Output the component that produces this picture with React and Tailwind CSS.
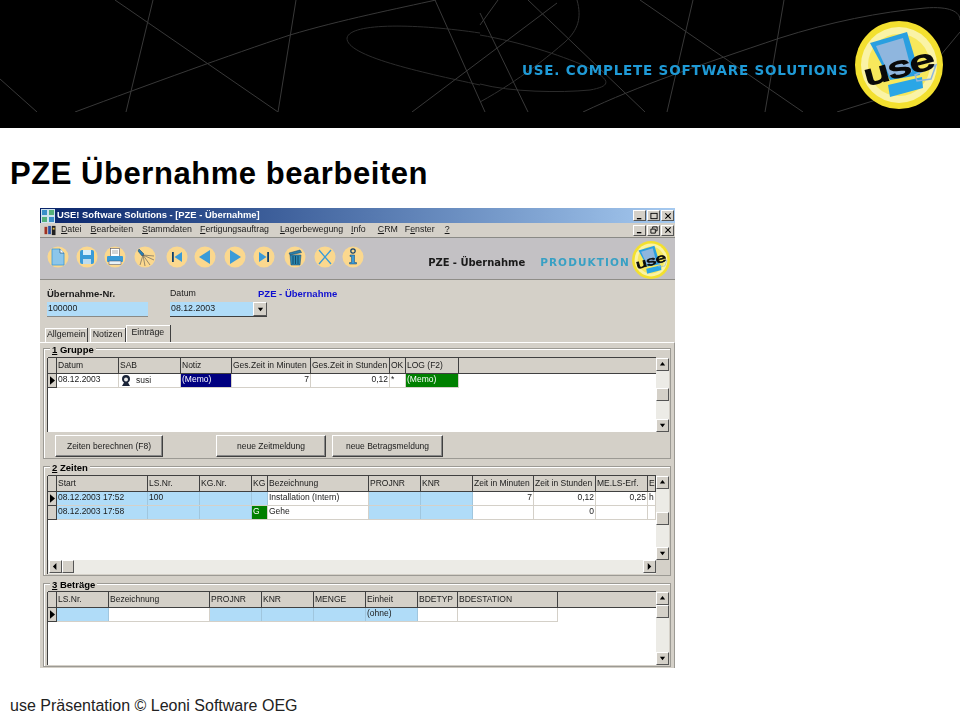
import React from "react";

const blue = "bg-[#b0dcf8]";
const raised = "border border-t-white border-l-white border-r-[#555] border-b-[#555]";

function HeaderLines() {
  return (
    <svg viewBox="0 0 960 112" className="w-[960px] h-[112px] block" fill="none" stroke="#383838" strokeWidth="1">
      <path d="M115 0L278 112M153 0L126 112M296 0L278 112M0 79L37 112" />
      <path d="M75 112C150 84 230 55 290 35C340 20 400 8 436 0" />
      <path d="M480 33C420 24 350 22 347 38C346 56 420 72 480 85" stroke="#2c2c2c" />
      <path d="M577 0C582 18 578 30 565 42C550 55 520 80 480 102" stroke="#303030" />
      <path d="M480 35C520 42 560 55 585 66C612 80 612 86 590 90C560 93 510 92 480 84" stroke="#2c2c2c" />
      <path d="M435 0L485 112M480 13L528 112M528 0L645 112M557 3L412 112M640 0L803 112M693 0L667 112M784 0L765 112M498 0L480 25" />
      <path d="M583 112C640 85 700 65 780 38C830 22 880 12 925 8C950 6 960 12 960 20" />
      <path d="M960 32L940 56M876 100L837 112" />
    </svg>
  );
}

function Logo({ className }) {
  return (
    <svg viewBox="0 0 88 88" className={className}>
      <circle cx="44" cy="44" r="44" fill="#f3e02f" />
      <circle cx="44" cy="44" r="38" fill="#faf3a6" />
      <circle cx="44" cy="44" r="31" fill="#f7e85c" />
      <polygon points="15,22 52,11 65,54 35,59" fill="#2a9fe0" />
      <polygon points="21,25 48,17 57,51 35,56" fill="#8fb6de" />
      <polygon points="33,64 67,56 68,67 35,76" fill="#2aa6e6" />
      <polygon points="60,54 81,44 76,58 62,60" fill="none" stroke="#8fb6de" strokeWidth="1.5" />
      <text x="8" y="56" transform="rotate(-15 44 45)" fontFamily="'Liberation Sans', sans-serif" fontWeight="400" fontSize="29" textLength="72" lengthAdjust="spacingAndGlyphs" fill="#0a0a0a" stroke="#0a0a0a" strokeWidth="1.5">use</text>
    </svg>
  );
}

function Tool({ className, children }) {
  return (
    <svg viewBox="0 0 22 22" className={"w-[22px] h-[22px] shrink-0 " + (className || "")}>
      <circle cx="11" cy="11" r="10.5" fill="#fbd88e" />
      {children}
    </svg>
  );
}

function Toolbar() {
  const c = "#3a9bd8";
  const d = "#10406c";
  return (
    <div className="flex pl-[7px] pt-[8px] h-[42px] items-start">
      <Tool><path d="M5 3h8l4 4v12H5z" fill="#8cc6ea" stroke={c} strokeWidth=".8" /><path d="M13 3v4h4" fill="#fff" stroke={d} strokeWidth=".6" /></Tool>
      <Tool className="ml-[7px]"><rect x="4" y="4" width="14" height="14" rx="2" fill={c} /><rect x="7" y="4" width="8" height="5" fill="#d8eefa" /><rect x="7" y="13" width="8" height="5" fill="#bcdcef" /></Tool>
      <Tool className="ml-[6px]"><rect x="6.5" y="2.5" width="9" height="8" fill="#fff" stroke="#556" strokeWidth=".6" /><path d="M8 5h6M8 7h6" stroke="#888" strokeWidth=".7" /><rect x="3" y="10" width="16" height="6" rx="1" fill={c} /><rect x="5" y="15" width="12" height="3.5" fill="#e8f2f8" stroke="#445" strokeWidth=".5" /></Tool>
      <Tool className="ml-[8px]"><path d="M5 3l5 5-2 2-4-5z" fill="#2a7fb4" stroke={d} strokeWidth=".5" /><path d="M9 9L20 10M9 9L20 14M9 9L16 19M9 9L11 20M9 9L6 19" stroke="#555" strokeWidth=".6" /></Tool>
      <Tool className="ml-[10px]"><rect x="6" y="6" width="1.8" height="10" fill={d} /><polygon points="16,6 16,16 8.5,11" fill={c} /></Tool>
      <Tool className="ml-[6px]"><polygon points="16,4 16,18 5,11" fill={c} /></Tool>
      <Tool className="ml-[8px]"><polygon points="6,4 6,18 17,11" fill={c} /></Tool>
      <Tool className="ml-[7px]"><polygon points="6,6 6,16 13.5,11" fill={c} /><rect x="14.2" y="6" width="1.8" height="10" fill={d} /></Tool>
      <Tool className="ml-[9px]"><path d="M5 7l11-3 1.5 2.5L6 9z" fill="#2a7fa8" stroke={d} strokeWidth=".5" /><path d="M6 9h11l-1 10H7z" fill="#2b88b0" stroke={d} strokeWidth=".5" /><path d="M9 10v8M11.5 10v8M14 10v8" stroke="#0e3a58" strokeWidth=".8" /></Tool>
      <Tool className="ml-[8px]"><path d="M5 4L17 18M17 4L5 18" stroke={c} strokeWidth="1.3" /></Tool>
      <Tool className="ml-[6px]"><circle cx="11" cy="5" r="2.2" fill="none" stroke={d} strokeWidth="1.2" /><path d="M8 9h4.5v7.5h2V18H7.5v-1.5h2v-6H8z" fill={c} stroke={d} strokeWidth=".5" /></Tool>
    </div>
  );
}

function Arrow({ dir }) {
  const pts = { up: "1,5 4,1 7,5", down: "1,2 4,6 7,2", left: "5,0 1,4 5,8", right: "2,0 6,4 2,8" }[dir];
  return (
    <div className={"w-[13px] h-[13px] shrink-0 bg-[#d4d0c8] flex items-center justify-center " + raised}>
      <svg viewBox="0 0 8 8" className="w-[7px] h-[7px]"><polygon points={pts} fill="#000" /></svg>
    </div>
  );
}

function VScroll({ thumb, corner }) {
  return (
    <div className="w-[13px] shrink-0 bg-[#ecebe6] flex flex-col">
      <Arrow dir="up" />
      <div className={"w-[13px] h-[13px] shrink-0 bg-[#d4d0c8] " + raised + " " + thumb} />
      <div className="flex-1" />
      <Arrow dir="down" />
      {corner && <div className="h-[14px] shrink-0 bg-[#d4d0c8]" />}
    </div>
  );
}

function HeadCell({ w, children }) {
  return (
    <div className={"h-full pl-[1px] border-r border-r-[#404040] shrink-0 whitespace-nowrap overflow-hidden leading-[14px] " + w}>{children}</div>
  );
}

function Cell({ w, bg, right, children }) {
  const line = bg === blue ? "border-r-[#a0c6de]" : "border-r-[#d4d0c8]";
  return (
    <div className={"h-full px-[1px] shrink-0 border-r whitespace-nowrap overflow-hidden leading-[11px] " + line + " " + w + " " + (bg || "") + (right ? " text-right" : "")}>{children}</div>
  );
}

function Grid({ height, cols, rows, thumb, hscroll }) {
  return (
    <div className={"flex border-l border-l-[#404040] text-[8.5px] " + height}>
      <div className="flex-1 min-w-0 flex flex-col bg-white">
        <div className="h-[15px] flex shrink-0 bg-[#d4d0c8] border-t border-t-[#404040] border-b border-b-[#404040] box-content -mt-px">
          <div className="w-[9px] h-full border-r border-r-[#404040] shrink-0" />
          {cols.map((c) => (
            <HeadCell key={c.t} w={c.w}>{c.t}</HeadCell>
          ))}
        </div>
        {rows.map((r, i) => (
          <div key={i} className="h-[14px] flex shrink-0">
            <div className="w-[9px] h-full shrink-0 bg-[#d4d0c8] border-r border-r-[#404040] border-b border-b-[#404040] flex items-center justify-center">
              {r.active && <svg viewBox="0 0 6 10" className="w-[5px] h-[9px]"><polygon points="0,0 6,5 0,10" fill="#000" /></svg>}
            </div>
            {r.cells.map((x, j) => (
              <div key={j} className="h-full border-b border-b-[#d4d0c8] flex">
                <Cell w={cols[j].w} bg={x.bg} right={x.right}>{x.c}</Cell>
              </div>
            ))}
          </div>
        ))}
        <div className="flex-1" />
        {hscroll && (
          <div className="h-[14px] shrink-0 bg-[#ecebe6] flex">
            <div className="w-[14px] shrink-0 flex justify-end"><Arrow dir="left" /></div>
            <div className={"w-[12px] h-[13px] bg-[#d4d0c8] " + raised} />
            <div className="flex-1" />
            <Arrow dir="right" />
          </div>
        )}
      </div>
      <VScroll thumb={thumb} corner={hscroll} />
    </div>
  );
}

function Box({ n, title, className, children }) {
  return (
    <div className={"relative border border-[#9c9a94] shadow-[inset_1px_1px_0_#fff] mx-[3px] pl-[3px] pr-[1px] " + className}>
      <div className="absolute left-[6px] -top-[5px] bg-[#d4d0c8] px-[2px] font-bold text-[9.5px] leading-[11px] text-black">
        <span className="underline">{n}</span> {title}
      </div>
      {children}
    </div>
  );
}

const cols1 = [
  { t: "Datum", w: "w-[62px]" }, { t: "SAB", w: "w-[62px]" }, { t: "Notiz", w: "w-[51px]" },
  { t: "Ges.Zeit in Minuten", w: "w-[79px]" }, { t: "Ges.Zeit in Stunden", w: "w-[79px]" },
  { t: "OK", w: "w-[16px]" }, { t: "LOG (F2)", w: "w-[53px]" },
];
const cols2 = [
  { t: "Start", w: "w-[91px]" }, { t: "LS.Nr.", w: "w-[52px]" }, { t: "KG.Nr.", w: "w-[52px]" }, { t: "KG", w: "w-[16px]" },
  { t: "Bezeichnung", w: "w-[101px]" }, { t: "PROJNR", w: "w-[52px]" }, { t: "KNR", w: "w-[52px]" },
  { t: "Zeit in Minuten", w: "w-[61px]" }, { t: "Zeit in Stunden", w: "w-[62px]" }, { t: "ME.LS-Erf.", w: "w-[52px]" }, { t: "E", w: "w-[8px]" },
];
const cols3 = [
  { t: "LS.Nr.", w: "w-[52px]" }, { t: "Bezeichnung", w: "w-[101px]" }, { t: "PROJNR", w: "w-[52px]" }, { t: "KNR", w: "w-[52px]" },
  { t: "MENGE", w: "w-[52px]" }, { t: "Einheit", w: "w-[52px]" }, { t: "BDETYP", w: "w-[40px]" }, { t: "BDESTATION", w: "w-[100px]" },
];

const rows1 = [{
  active: true,
  cells: [
    { c: "08.12.2003" },
    { c: <span className="flex items-center gap-[4px]"><svg viewBox="0 0 12 12" className="w-[12px] h-[12px] shrink-0"><path d="M2 5a4 4 0 0 1 8 0c0 2-1 3-2 3.500L10 12H2l2-3.500C3 8 2 7 2 5z" fill="#1a2438" /><circle cx="6" cy="5.500" r="2" fill="#e8e8e8" /></svg>susi</span> },
    { c: "(Memo)", bg: "bg-[#000080] text-white" },
    { c: "7", right: true }, { c: "0,12", right: true }, { c: "*" },
    { c: "(Memo)", bg: "bg-[#008000] text-white" },
  ],
}];

const rows2 = [
  {
    active: true,
    cells: [
      { c: "08.12.2003 17:52", bg: blue }, { c: "100", bg: blue }, { c: "", bg: blue }, { c: "", bg: blue },
      { c: "Installation (Intern)" }, { c: "", bg: blue }, { c: "", bg: blue },
      { c: "7", right: true }, { c: "0,12", right: true }, { c: "0,25", right: true }, { c: "h" },
    ],
  },
  {
    cells: [
      { c: "08.12.2003 17:58", bg: blue }, { c: "", bg: blue }, { c: "", bg: blue }, { c: "G", bg: "bg-[#008000] text-white" },
      { c: "Gehe" }, { c: "", bg: blue }, { c: "", bg: blue },
      { c: "" }, { c: "0", right: true }, { c: "" }, { c: "" },
    ],
  },
];

const rows3 = [{
  active: true,
  cells: [
    { c: "", bg: blue }, { c: "" }, { c: "", bg: blue }, { c: "", bg: blue }, { c: "", bg: blue },
    { c: "(ohne)", bg: blue }, { c: "" }, { c: "" },
  ],
}];

function Btn({ className, children }) {
  return (
    <div className={"h-[22px] bg-[#d4d0c8] flex items-center justify-center text-[8.5px] border border-t-white border-l-white border-r-[#404040] border-b-[#404040] shadow-[inset_-1px_-1px_0_#888] " + className}>{children}</div>
  );
}

function WinBtn({ children, className }) {
  return (
    <div className={"w-[13px] h-[11px] bg-[#d4d0c8] flex items-center justify-center " + raised + " " + (className || "")}>
      <svg viewBox="0 0 9 9" className="w-[8px] h-[8px]" fill="none" stroke="#000" strokeWidth="1">{children}</svg>
    </div>
  );
}

function Menu({ pre, u, rest, className }) {
  return <span className={className}>{pre}<span className="underline">{u}</span>{rest}</span>;
}

function AppWindow() {
  return (
    <div className="w-[635px] h-[460px] ml-[40px] bg-[#d4d0c8] flex flex-col font-['Liberation_Sans',Arial,sans-serif] text-[8.8px] text-[#1a1a1a] blur-[0.3px] shrink-0">
      <div className="h-[15px] shrink-0 bg-gradient-to-r from-[#0a246a] to-[#a6caf0] flex items-center pl-[1px] pr-[1px]">
        <svg viewBox="0 0 14 14" className="w-[14px] h-[14px] shrink-0"><rect width="14" height="14" fill="#cfe3ee" /><rect x="1" y="1" width="5" height="5" fill="#3a8fc8" /><rect x="8" y="1" width="5" height="5" fill="#55b07a" /><rect x="1" y="8" width="5" height="5" fill="#55b07a" /><rect x="8" y="8" width="5" height="5" fill="#3a8fc8" /></svg>
        <span className="ml-[2px] text-white font-bold text-[9.4px] whitespace-nowrap">USE! Software Solutions - [PZE - Übernahme]</span>
        <div className="ml-auto flex">
          <WinBtn><path d="M1 7.500h5" strokeWidth="1.500" /></WinBtn>
          <WinBtn className="ml-px"><rect x="1" y="1.500" width="7" height="6" /></WinBtn>
          <WinBtn className="ml-px"><path d="M1.500 1.500l6 6M7.500 1.500l-6 6" strokeWidth="1.200" /></WinBtn>
        </div>
      </div>
      <div className="h-[15px] shrink-0 flex items-center border-b border-b-[#8a8a86] pl-[3px] pr-[1px]">
        <svg viewBox="0 0 14 12" className="w-[14px] h-[11px] shrink-0"><path d="M1 2h3v8H1z" fill="#a03020" /><path d="M5 1h3v9H5z" fill="#2a50a0" /><path d="M9 1h4v10H9z" fill="#202020" /><path d="M10 3h2v2h-2z" fill="#e8c040" /></svg>
        <Menu className="ml-[4px]" u="D" rest="atei" />
        <Menu className="ml-[9px]" u="B" rest="earbeiten" />
        <Menu className="ml-[9px]" u="S" rest="tammdaten" />
        <Menu className="ml-[8px]" u="F" rest="ertigungsauftrag" />
        <Menu className="ml-[11px]" u="L" rest="agerbewegung" />
        <Menu className="ml-[8px]" u="I" rest="nfo" />
        <Menu className="ml-[12px]" u="C" rest="RM" />
        <Menu className="ml-[7px]" pre="F" u="e" rest="nster" />
        <Menu className="ml-[10px]" u="?" rest="" />
        <div className="ml-auto flex">
          <WinBtn><path d="M1 7.500h5" strokeWidth="1.500" /></WinBtn>
          <WinBtn className="ml-px"><path d="M1 3.500h5v4.500H1zM3 3V1h5v4.500H6.500" /></WinBtn>
          <WinBtn className="ml-px"><path d="M1.500 1.500l6 6M7.500 1.500l-6 6" strokeWidth="1.200" /></WinBtn>
        </div>
      </div>
      <div className="h-[42px] shrink-0 bg-[#c3c1c4] border-b border-b-[#8f8d88] flex">
        <Toolbar />
        <div className="ml-auto flex items-center pr-[5px]">
          <span className="font-['DejaVu_Sans',sans-serif] font-bold text-[10px] tracking-[-0.05px] text-[#1a1a1a] whitespace-nowrap mt-[8px]">PZE - Übernahme</span>
          <span className="ml-[15px] font-['DejaVu_Sans',sans-serif] font-bold text-[10.5px] tracking-[1.100px] text-[#38a0c4] whitespace-nowrap mt-[8px]">PRODUKTION</span>
          <Logo className="w-[38px] h-[38px] ml-[2px] mt-[2px] shrink-0" />
        </div>
      </div>
      <div className="h-[62px] shrink-0 relative flex flex-col pt-[8px]">
        <div className="flex pl-[7px] h-[33px]">
          <div className="w-[101px] flex flex-col">
            <span className="font-bold leading-[11px] text-[9.5px]">Übernahme-Nr.</span>
            <div className={"mt-[3px] h-[15px] leading-[12px] pl-[1px] border-b border-b-[#8a8a86] " + blue}>100000</div>
          </div>
          <div className="w-[97px] ml-[22px] flex flex-col">
            <span className="leading-[11px]">Datum</span>
            <div className={"mt-[3px] h-[15px] leading-[12px] pl-[1px] flex border-b border-b-[#404040] " + blue}>
              08.12.2003
              <div className={"ml-auto w-[14px] h-[14px] bg-[#d4d0c8] flex items-center justify-center " + raised}>
                <svg viewBox="0 0 8 8" className="w-[7px] h-[7px]"><polygon points="1,2 4,6 7,2" fill="#000" /></svg>
              </div>
            </div>
          </div>
          <span className="ml-[-9px] font-bold text-[#1010d0] leading-[11px] text-[9.5px] whitespace-nowrap">PZE - Übernahme</span>
        </div>
        <div className="flex items-end h-[17px] pl-[5px] mt-[4px]">
          <div className="h-[14px] pl-[2px] pr-[1px] leading-[13px] border-r border-r-[#404040] shadow-[inset_1px_1px_0_#fff]">Allgemein</div>
          <div className="h-[14px] px-[3px] ml-[2px] leading-[13px] border-r border-r-[#404040] shadow-[inset_1px_1px_0_#fff]">Notizen</div>
          <div className="h-[17px] pl-[5px] pr-[6px] leading-[15px] border-r border-r-[#404040] shadow-[inset_1px_1px_0_#fff]">Einträge</div>
        </div>
      </div>
      <div className="flex-1 flex flex-col border-t border-t-white border-r border-r-[#9c9a94]">
        <Box n="1" title="Gruppe" className="mt-[5px] h-[111px] pt-[9px]">
          <Grid height="h-[74px]" cols={cols1} rows={rows1} thumb="mt-[17px]" />
          <div className="flex mt-[3px] pl-[8px]">
            <Btn className="w-[108px]">Zeiten berechnen (F8)</Btn>
            <Btn className="w-[110px] ml-[53px]">neue Zeitmeldung</Btn>
            <Btn className="w-[111px] ml-[6px]">neue Betragsmeldung</Btn>
          </div>
        </Box>
        <Box n="2" title="Zeiten" className="mt-[7px] h-[110px] pt-[9px]">
          <Grid height="h-[98px]" cols={cols2} rows={rows2} thumb="mt-[23px]" hscroll />
        </Box>
        <Box n="3" title="Beträge" className="mt-[7px] h-[84px] pt-[8px]">
          <Grid height="h-[73px]" cols={cols3} rows={rows3} thumb="" />
        </Box>
      </div>
    </div>
  );
}

export default function App() {
  return (
    <div className="w-[960px] h-[720px] bg-white flex flex-col overflow-hidden font-['Liberation_Sans',Arial,sans-serif]">
      <header className="relative h-[128px] bg-black shrink-0 blur-[0.25px]">
        <HeaderLines />
        <span className="absolute left-[522px] top-[62px] font-['DejaVu_Sans',sans-serif] font-bold text-[13.5px] leading-[16px] tracking-[0.8px] text-[#1f9ad6] whitespace-nowrap">USE. COMPLETE SOFTWARE SOLUTIONS</span>
        <Logo className="absolute left-[855px] top-[21px] w-[88px] h-[88px]" />
      </header>
      <h1 className="mt-[28px] ml-[10px] text-[31px] leading-[36px] font-bold text-black tracking-[0.55px] whitespace-nowrap">PZE Übernahme bearbeiten</h1>
      <div className="mt-[16px]"><AppWindow /></div>
      <footer className="mt-[29px] ml-[10px] text-[16px] leading-[18px] text-[#222]">use Präsentation © Leoni Software OEG</footer>
    </div>
  );
}
